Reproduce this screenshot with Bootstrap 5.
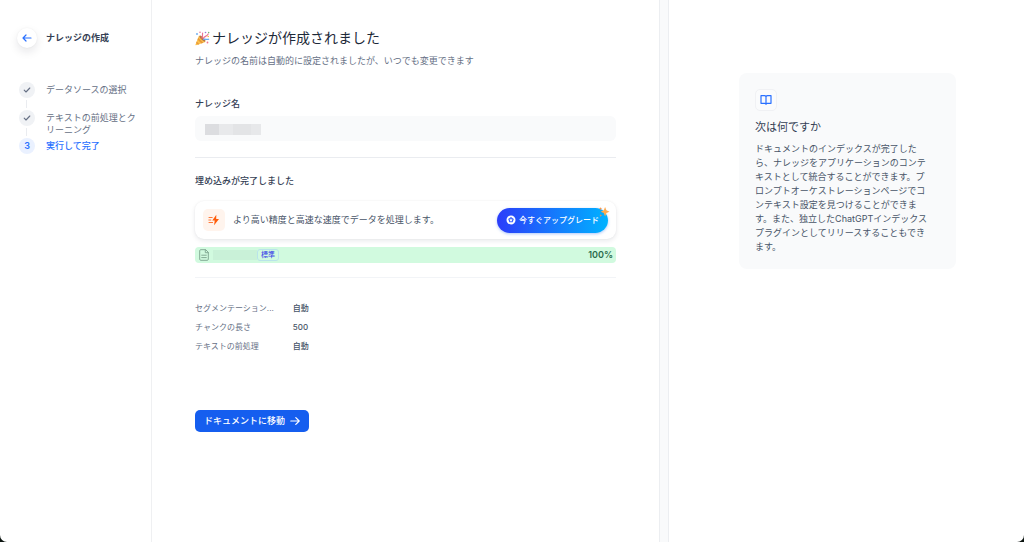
<!DOCTYPE html>
<html lang="ja">
<head>
<meta charset="utf-8">
<meta name="viewport" content="width=device-width, initial-scale=1">
<title>ナレッジの作成</title>
<link href="https://cdn.jsdelivr.net/npm/bootstrap@5.3.0/dist/css/bootstrap.min.css" rel="stylesheet">
<style>
body{background:#0c1410;font-family:Inter,"Noto Sans CJK JP",sans-serif;font-size:9px;line-height:14px;color:#344054}
.app-shell{background:#fff;border-radius:0 0 7px 7px;overflow:hidden}
.side{flex:0 0 152px;border-right:1px solid #eff0f2;padding:28px 12px 24px 17px}
.side-head{gap:9px}
.back-btn{width:20px;height:20px;background:#fff;border:0;box-shadow:0 4px 10px rgba(16,24,40,.1),0 0 2px rgba(16,24,40,.06)}
.side-title{font-size:9px;line-height:14px;font-weight:700;margin:0;color:#344054}
.steps{margin:34px 0 0 2px}
.step{min-height:28px;position:relative;gap:11px;color:#667085;line-height:12px}
.step:not(:last-child)::after{content:"";position:absolute;left:7px;top:18px;height:8px;width:1px;background:#eaecf0}
.step-dot{flex:0 0 16px;height:16px;background:#f0f2f5;font-weight:600}
.step-label{padding-top:2px}
.step.current{color:#2970ff}
.step.current .step-dot{background:#eaf1ff}
.step.current .step-label{font-weight:500}
.content{padding:28px 43px 32px;min-width:0}
.page-title{font-size:14px;line-height:20px;font-weight:400;color:#1d2939;gap:2px}
.sub{color:#667085;margin:6px 0 29px}
.field-label{font-weight:500;color:#344054;line-height:14px}
.name-label{margin-bottom:5px}
.name-box{background:#f9fafb;border:0;border-radius:6px;height:25px;min-height:0;font-size:9px;padding:4px 10px}
.masked{left:10px;top:8px;width:56px;height:11px;background:linear-gradient(90deg,#dcdde0 0 14px,#e8e9eb 14px 28px,#e3e4e6 28px 46px,#e7e8ea 46px)}
.rule{border:0;border-top:1px solid #eaecf0;opacity:1;margin:16px 0}
.rule.soft{border-color:#f2f4f7;margin:14px 0 21px}
.banner{height:38px;border-radius:9px;padding:0 8px;margin:13px 0 8px;background:#fff;color:#475467;box-shadow:0 2px 5px rgba(16,24,40,.09),0 0 2px rgba(16,24,40,.05)}
.bolt{width:22px;height:22px;border-radius:5px;background:#fff4ed}
.upgrade{height:25px;font-size:8px;line-height:12px;font-weight:500;padding:0 9px;border:0;background:linear-gradient(90deg,#2b3dfa,#00b2ff);color:#fff;gap:3px;box-shadow:0 1px 3px rgba(21,94,239,.35)}
.upgrade:hover{color:#fff}
.spark{top:-2px;right:-2px}
.file-row{height:16px;border-radius:4px;background:#d1fadf;padding:0 3px 0 4px}
.file-mask{width:44px;height:10px;background:#c9f1d8}
.type-tag{font-size:7px;line-height:10px;padding:0 3px;border:1px solid #b9e3ea;border-radius:3px;color:#444ce7;font-weight:500}
.pct{color:#2b6c4d;font-weight:600}
.facts{margin:0 0 54px;font-size:8px;line-height:19px}
.facts th{font-weight:400;color:#667085;padding:0 19px 0 0}
.facts td{padding:0;font-weight:500;color:#475467}
.go{height:22px;background:#155eef;color:#fff;border:0;border-radius:5px;font-size:9px;line-height:14px;font-weight:500;padding:0 9px;gap:5px}
.go:hover{background:#004eeb;color:#fff}
.gutter-strip{flex:0 0 10px;background:#f9fafb;border:solid #eceef1;border-width:0 1px}
.help{flex:0 0 355px;padding:73px 68px 32px 70px}
.help-card{background:#f9fafb;border-radius:8px;padding:16px 16px 15px}
.book{width:22px;height:22px;border:1px solid #f0f1f4;border-radius:5px;background:#fafbfc}
.help-title{font-size:11px;line-height:16px;font-weight:400;margin:8px 0 7px;color:#344054}
.help-text{line-height:14px;color:#475467}
@media (max-width:900px){.gutter-strip{display:none}.help{flex:1 1 100%;padding:24px 43px}.app-shell{flex-wrap:wrap}}
</style>
</head>
<body>
<div class="app-shell d-flex min-vh-100">
  <nav class="side" aria-label="手順">
    <div class="side-head d-flex align-items-center">
      <button type="button" class="back-btn rounded-circle p-0 d-flex align-items-center justify-content-center" aria-label="戻る">
        <svg width="10" height="10" viewBox="0 0 10 10" fill="none" stroke="#2970ff" stroke-width="1.2" stroke-linecap="round" stroke-linejoin="round"><path d="M9 5H1M4 2 1 5l3 3"/></svg>
      </button>
      <h1 class="side-title">ナレッジの作成</h1>
    </div>
    <ol class="steps list-unstyled mb-0">
      <li class="step d-flex"><span class="step-dot rounded-circle d-flex align-items-center justify-content-center"><svg width="8" height="8" viewBox="0 0 8 8" fill="none" stroke="#667085" stroke-width="1.1" stroke-linecap="round" stroke-linejoin="round"><path d="M1.2 4.2 3 6l3.8-4"/></svg></span><span class="step-label">データソースの選択</span></li>
      <li class="step d-flex"><span class="step-dot rounded-circle d-flex align-items-center justify-content-center"><svg width="8" height="8" viewBox="0 0 8 8" fill="none" stroke="#667085" stroke-width="1.1" stroke-linecap="round" stroke-linejoin="round"><path d="M1.2 4.2 3 6l3.8-4"/></svg></span><span class="step-label">テキストの前処理とクリーニング</span></li>
      <li class="step current d-flex" aria-current="step"><span class="step-dot rounded-circle d-flex align-items-center justify-content-center">3</span><span class="step-label">実行して完了</span></li>
    </ol>
  </nav>

  <main class="content flex-grow-1">
    <h2 class="page-title d-flex align-items-center mb-0">
      <svg width="15" height="15" viewBox="0 0 15 15" aria-hidden="true">
        <path d="M4 4.500 10.500 11 1 14.200C.5 14.400.3 14 .5 13.600Z" fill="#fbc24d"/>
        <path d="m3.200 6.800 5 5-1.700.6-4-4ZM1.700 10.600l2.700 2.700-1.500.5-1.800-1.800Z" fill="#e8983a"/>
        <ellipse cx="7.400" cy="7.600" rx="4" ry="1.300" transform="rotate(45 7.400 7.600)" fill="#b8733f"/>
        <path d="M7 7c1-1.500.2-3 .6-4.800M8.400 7.300c1-2.300 3-1.500 4.800-4.300" fill="none" stroke="#ee7393" stroke-width="1.200" stroke-linecap="round"/>
        <path d="M8.500 8.500c1.500-1 3.200.6 5.200-.3" fill="none" stroke="#67aaf0" stroke-width="1.200" stroke-linecap="round"/>
        <circle cx="2" cy="3" r=".9" fill="#67aaf0"/><circle cx="5" cy="1.200" r=".8" fill="#ee7393"/><circle cx="10.500" cy="1.500" r=".8" fill="#a173d8"/><circle cx="13.200" cy="5.500" r=".8" fill="#f6b73c"/><circle cx="12.500" cy="11.500" r=".9" fill="#ee7393"/><circle cx="13.700" cy="1.500" r=".7" fill="#67b56b"/>
      </svg>
      ナレッジが作成されました
    </h2>
    <p class="sub">ナレッジの名前は自動的に設定されましたが、いつでも変更できます</p>

    <label class="field-label name-label d-block" for="kname">ナレッジ名</label>
    <div class="position-relative">
      <input id="kname" type="text" class="name-box form-control" readonly>
      <span class="masked position-absolute"></span>
    </div>
    <hr class="rule">

    <div class="field-label">埋め込みが完了しました</div>
    <div class="banner d-flex align-items-center">
      <span class="bolt d-flex align-items-center justify-content-center">
        <svg width="12" height="12" viewBox="0 0 12 12"><path d="M8.300.8 4.300 6.600h2.400l-.6 4.600 4.900-6.200H8.200Z" fill="#ff5c0a"/><path d="M1 3.500h3.200M.8 6h2M1 8.500h3.600" stroke="#ff7a38" stroke-width="1" stroke-linecap="round"/></svg>
      </span>
      <span class="ms-2 me-auto">より高い精度と高速な速度でデータを処理します。</span>
      <button type="button" class="upgrade btn rounded-pill d-flex align-items-center position-relative">
        <svg width="10" height="10" viewBox="0 0 10 10"><circle cx="5" cy="5" r="4.500" fill="#fff"/><path d="m5 1.900 2.800 2-1.100 3.300H3.300L2.200 3.900Z" fill="#3a62fb"/><path d="M5 3.300 5.500 4.400l1.200.1-.9.8.3 1.200L5 5.900l-1.100.6.3-1.200-.9-.8 1.200-.1Z" fill="#fff"/></svg>
        今すぐアップグレード
        <svg class="spark position-absolute" width="12" height="12" viewBox="0 0 11 11"><path d="M6.500 1 7.700 4 10.600 5.200 7.700 6.400 6.500 9.600 5.300 6.400 2.400 5.200 5.300 4Z" fill="#fdab4f"/><path d="m2.300 1 .4 1.100 1.100.4-1.100.4-.4 1.100-.4-1.100L.8 2.500l1.100-.4ZM2.500 7.500l.4.900.9.300-.9.400-.4.900-.3-.9-.9-.4.900-.3Z" fill="#f79045"/></svg>
      </button>
    </div>
    <div class="file-row d-flex align-items-center">
      <svg width="10" height="12" viewBox="0 0 10 12" fill="none" stroke="#83aa94" stroke-width="1" stroke-linejoin="round" stroke-linecap="round"><path d="M6.300.7H1.800Q.7.700.7 1.800v8.400q0 1.100 1.100 1.100h6.400q1.100 0 1.100-1.100V3.700ZM6.300.7v3h3M2.700 6.200h4.600M2.700 8.600h4.600"/></svg>
      <span class="file-mask ms-1"></span>
      <span class="type-tag">標準</span>
      <span class="pct ms-auto">100%</span>
    </div>
    <hr class="rule soft">

    <table class="facts">
      <tbody>
        <tr><th scope="row">セグメンテーション...</th><td>自動</td></tr>
        <tr><th scope="row">チャンクの長さ</th><td>500</td></tr>
        <tr><th scope="row">テキストの前処理</th><td>自動</td></tr>
      </tbody>
    </table>
    <button type="button" class="go btn d-inline-flex align-items-center">ドキュメントに移動
      <svg width="10" height="10" viewBox="0 0 10 10" fill="none" stroke="#fff" stroke-width="1.200" stroke-linecap="round" stroke-linejoin="round"><path d="M.8 5h8.400M5.800 1.600 9.200 5 5.800 8.400"/></svg>
    </button>
  </main>

  <div class="gutter-strip"></div>
  <aside class="help">
    <section class="help-card">
      <div class="book d-flex align-items-center justify-content-center">
        <svg width="12" height="12" viewBox="0 0 12 12" fill="none" stroke="#2970ff" stroke-width="1.200" stroke-linejoin="round" stroke-linecap="round"><path d="M6 2.700Q5.500 1.700 4.500 1.700H1v7.600h3.800q.8 0 1.200.9.400-.9 1.200-.9H11V1.700H7.500Q6.500 1.700 6 2.700v7.500"/></svg>
      </div>
      <h2 class="help-title">次は何ですか</h2>
      <p class="help-text mb-0">ドキュメントのインデックスが完了した<br>ら、ナレッジをアプリケーションのコンテ<br>キストとして統合することができます。プ<br>ロンプトオーケストレーションページでコ<br>ンテキスト設定を見つけることができま<br>す。また、独立したChatGPTインデックス<br>プラグインとしてリリースすることもでき<br>ます。</p>
    </section>
  </aside>
</div>
<script src="https://cdn.jsdelivr.net/npm/bootstrap@5.3.0/dist/js/bootstrap.bundle.min.js"></script>
</body>
</html>
